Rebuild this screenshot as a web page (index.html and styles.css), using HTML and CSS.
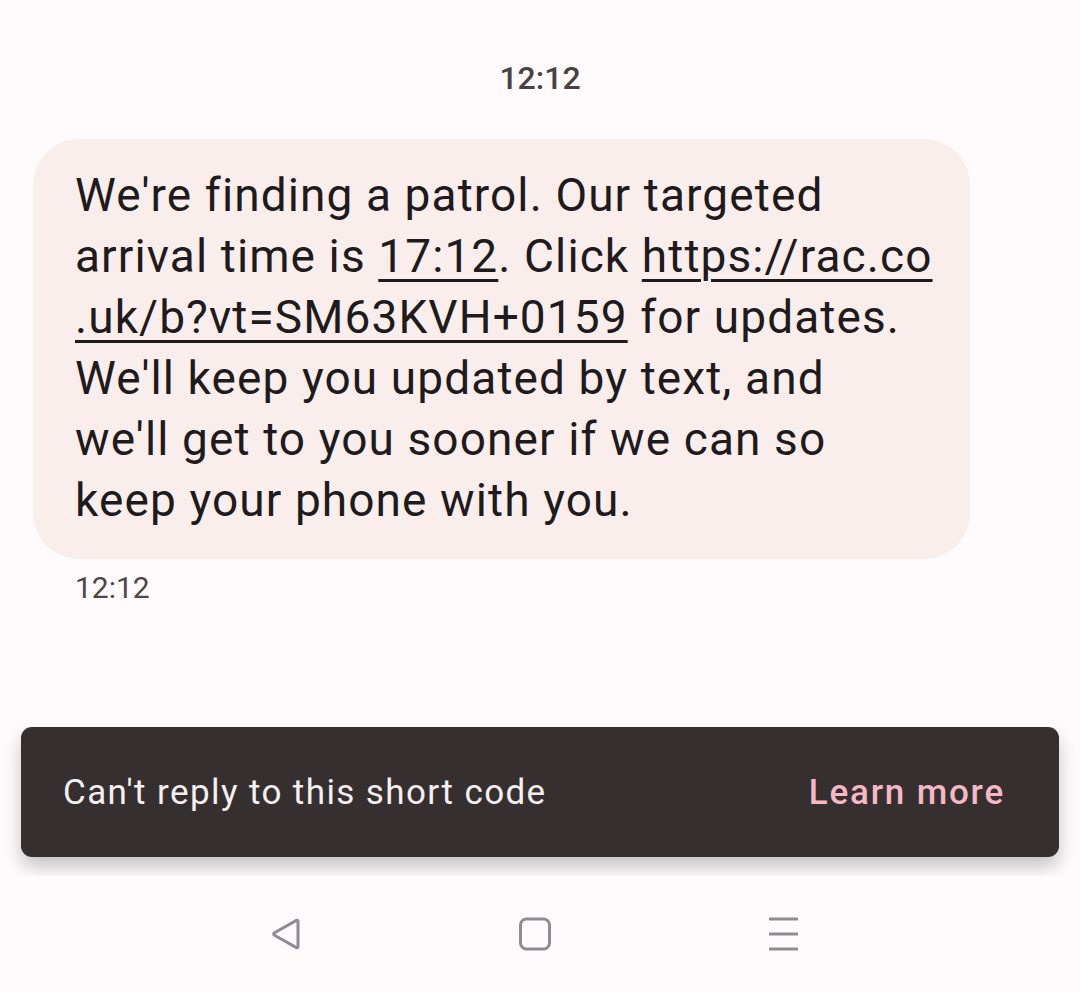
FILE: index.html
```html
<!DOCTYPE html>
<html lang="en">
<head>
  <meta charset="UTF-8" />
  <meta name="viewport" content="width=device-width, initial-scale=1" />
  <title>Messages</title>
  <link rel="stylesheet" href="styles.css">
</head>
<body>

  <!-- Conversation -->
  <div class="screen">
    <div class="day-time">12:12</div>

    <div class="bubble">
      We're finding a patrol. Our targeted<br />
      arrival time is <span class="link">17:12</span>. Click <span class="link">https://rac.co<br />.uk/b?vt=SM63KVH+0159</span> for updates.<br />
      We'll keep you updated by text, and<br />
      we'll get to you sooner if we can so<br />
      keep your phone with you.
    </div>
    <div class="msg-time">12:12</div>

    <!-- Snackbar -->
    <div class="snackbar">
      <span class="snack-text">Can't reply to this short code</span>
      <span class="snack-action">Learn more</span>
    </div>
  </div>

  <!-- Navigation bar -->
  <div class="navbar">
    <svg class="nav-icon" viewBox="0 0 34 34">
      <path d="M29 4.5 L29 29.5 Q29 31.5 27 30.4 L5.5 18.2 Q3.8 17 5.5 15.8 L27 3.6 Q29 2.5 29 4.5 Z" />
    </svg>
    <svg class="nav-icon" viewBox="0 0 34 34">
      <rect x="2.5" y="2" width="29" height="30" rx="6" />
    </svg>
    <svg class="nav-icon" viewBox="0 0 34 34">
      <path d="M2 2 H31 M2 17 H31 M2 32 H31" />
    </svg>
  </div>

</body>
</html>
```

FILE: styles.css
```css
body {
  margin: 0;
  font-family: 'Roboto', 'Noto Sans', sans-serif;
  background: #fffbfd;
  overflow: hidden;
}

.screen {
  height: 876px;
  overflow: hidden;
  display: flex;
  flex-direction: column;
}

.day-time {
  margin-top: 59px;
  text-align: center;
  font-size: 32px;
  font-weight: 500;
  color: #4a4145;
  line-height: 38px;
}

.bubble {
  margin: 42px 0 0 33px;
  width: 853px;
  padding: 26px 42px 28px 42px;
  background: #f9eeec;
  border-radius: 46px;
  font-size: 46px;
  line-height: 61px;
  letter-spacing: 1.1px;
  color: #1f1a1b;
  white-space: nowrap;
}

.link {
  text-decoration: underline;
  text-decoration-thickness: 3px;
  text-underline-offset: 7px;
}

.msg-time {
  margin: 10px 0 0 75px;
  font-size: 30px;
  line-height: 38px;
  color: #4f4548;
}

.snackbar {
  margin: 120px 21px 0 21px;
  height: 130px;
  padding: 0 54px 0 42px;
  background: #352f30;
  border-radius: 11px;
  box-shadow: 0 10px 18px rgba(0, 0, 0, 0.22);
  display: flex;
  align-items: center;
  justify-content: space-between;
  font-size: 35px;
  letter-spacing: 1.4px;
}

.snack-text {
  color: #f5eff0;
}

.snack-action {
  color: #f6b8c4;
  font-weight: 500;
  letter-spacing: 1.8px;
}

.navbar {
  height: 116px;
  background: #fffbfd;
  display: flex;
  justify-content: center;
  align-items: center;
  gap: 215px;
  padding-right: 10px;
}

.nav-icon {
  width: 34px;
  height: 34px;
  fill: none;
  stroke: #8f8b90;
  stroke-width: 3;
  stroke-linejoin: round;
}
```
